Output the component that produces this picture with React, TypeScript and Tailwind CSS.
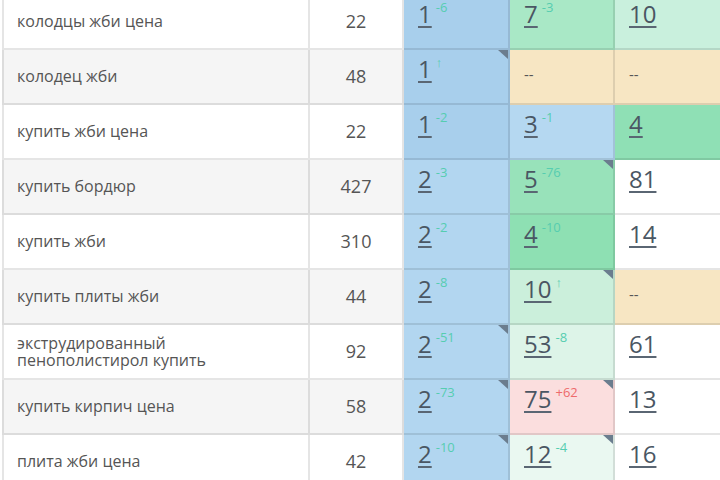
const rows = [
  { kw: "колодцы жби цена", vol: "22", cells: [
    { v: "1", d: "-6", bg: "bg-[#a8cfec]" },
    { v: "7", d: "-3", bg: "bg-[#a9e8c6]" },
    { v: "10", bg: "bg-[#c9f0dd]" },
  ] },
  { kw: "колодец жби", vol: "48", cells: [
    { v: "1", d: "↑", bg: "bg-[#a8cfec]", corner: true },
    { v: "--", bg: "bg-[#f7e6c3]" },
    { v: "--", bg: "bg-[#f7e6c3]" },
  ] },
  { kw: "купить жби цена", vol: "22", cells: [
    { v: "1", d: "-2", bg: "bg-[#a8cfec]" },
    { v: "3", d: "-1", bg: "bg-[#b5d8f1]" },
    { v: "4", bg: "bg-[#8fe0b5]" },
  ] },
  { kw: "купить бордюр", vol: "427", cells: [
    { v: "2", d: "-3", bg: "bg-[#b2d6f0]" },
    { v: "5", d: "-76", bg: "bg-[#98e2ba]", corner: true },
    { v: "81", bg: "bg-white" },
  ] },
  { kw: "купить жби", vol: "310", cells: [
    { v: "2", d: "-2", bg: "bg-[#b2d6f0]" },
    { v: "4", d: "-10", bg: "bg-[#8ee0b3]" },
    { v: "14", bg: "bg-white" },
  ] },
  { kw: "купить плиты жби", vol: "44", cells: [
    { v: "2", d: "-8", bg: "bg-[#b2d6f0]" },
    { v: "10", d: "↑", bg: "bg-[#cbefdb]", corner: true },
    { v: "--", bg: "bg-[#f7e6c3]" },
  ] },
  { kw: "экструдированный пенополистирол купить", vol: "92", cells: [
    { v: "2", d: "-51", bg: "bg-[#b2d6f0]", corner: true },
    { v: "53", d: "-8", bg: "bg-[#ddf4e8]" },
    { v: "61", bg: "bg-white" },
  ] },
  { kw: "купить кирпич цена", vol: "58", cells: [
    { v: "2", d: "-73", bg: "bg-[#b2d6f0]", corner: true },
    { v: "75", d: "+62", bg: "bg-[#fbdede]", corner: true, bad: true },
    { v: "13", bg: "bg-white" },
  ] },
  { kw: "плита жби цена", vol: "42", cells: [
    { v: "2", d: "-10", bg: "bg-[#b2d6f0]", corner: true },
    { v: "12", d: "-4", bg: "bg-[#eaf8f1]", corner: true },
    { v: "16", bg: "bg-white" },
  ] },
];

type Cell = { v: string; d?: string; bg: string; corner?: boolean; bad?: boolean };

function RankCell({ c, w }: { c: Cell; w: string }) {
  return (
    <div className={`relative ${w} ${c.bg} border-r-2 border-b-2 border-black/10 pl-[14px] pt-[7px]`}>
      {c.v === "--" ? (
        <span className="block pt-[6px] text-[15px] text-[#555]">--</span>
      ) : (
        <div className="flex items-start">
          <span className="text-[24px] leading-[24px] text-[#4a5663] underline decoration-2 underline-offset-[3px] decoration-[#5a6673]">{c.v}</span>
          {c.d && (
            <span className={`ml-[4px] -mt-[3px] text-[13px] leading-[16px] ${c.bad ? "text-[#ee6b6b]" : "text-[#56cdb0]"}`}>{c.d}</span>
          )}
        </div>
      )}
      {c.corner && (
        <div className="absolute top-0 right-0 w-[10px] h-[9px] bg-[#6b7d8e] [clip-path:polygon(0_0,100%_0,100%_100%)]" />
      )}
    </div>
  );
}

export default function App() {
  return (
    <div className="w-[720px] h-[480px] overflow-hidden bg-white" style={{ fontFamily: '"Open Sans", "Liberation Sans", sans-serif' }}>
      <div className="-mt-[5px] ml-[2px] flex flex-col w-[760px]">
        {rows.map((r, i) => (
          <div key={r.kw} className={`flex h-[55px] ${i % 2 === 1 ? "bg-[#f5f5f5]" : "bg-white"}`}>
            <div className="w-[308px] flex items-center border-l-2 border-r-2 border-b-2 border-black/10 pl-[13px] pr-4 text-[16px] leading-[17px] text-[#555]">
              <span className={r.kw.length > 30 ? "w-[200px]" : ""}>{r.kw}</span>
            </div>
            <div className="w-[94px] flex items-center justify-center border-r-2 border-b-2 border-black/10 text-[18px] text-[#555]">
              {r.vol}
            </div>
            <RankCell c={r.cells[0]} w="w-[106px]" />
            <RankCell c={r.cells[1]} w="w-[105px]" />
            <RankCell c={r.cells[2]} w="flex-1" />
          </div>
        ))}
      </div>
    </div>
  );
}
